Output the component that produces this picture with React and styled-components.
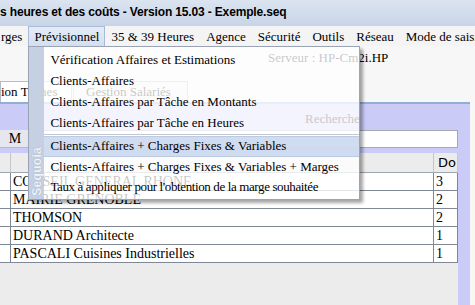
import styled, { createGlobalStyle } from "styled-components";

const GlobalStyle = createGlobalStyle`
  html, body {
    margin: 0;
    padding: 0;
    background: #f2f2f2;
    overflow: hidden;
  }
`;

const Window = styled.div`
  width: 475px;
  height: 305px;
  display: flex;
  flex-direction: column;
  background: #f2f2f2;
  overflow: hidden;
  font: 13px "Liberation Serif", serif;
  color: #000;
`;

const TitleBar = styled.div`
  height: 26px;
  flex: none;
  display: flex;
  align-items: center;
  padding-bottom: 2px;
  box-sizing: border-box;
  background: linear-gradient(#dbe4f0, #c8d5e7);
  font: bold 12px "Liberation Sans", Arial, sans-serif;
  letter-spacing: -0.15px;
  white-space: nowrap;
`;

const MenuBar = styled.div`
  height: 20px;
  flex: none;
  display: flex;
  align-items: stretch;
  background: #f4f4f4;
  white-space: nowrap;
  position: relative;
  z-index: 2;
`;

const MenuItem = styled.div`
  position: relative;
  display: flex;
  align-items: center;
  padding: 0 5px;
  border: 1px solid ${(p) => (p.$open ? "#a7bad6" : "transparent")};
  border-bottom: none;
  background: ${(p) => (p.$open ? "linear-gradient(#e4ecf7, #d3dff0)" : "transparent")};

  &:first-child {
    padding-left: 0;
  }
`;

const Dropdown = styled.div`
  position: absolute;
  top: 100%;
  left: -1px;
  width: 330px;
  display: flex;
  border: 1px solid #9aa4b4;
  background: rgba(255, 255, 255, 0.78);
  box-shadow: 3px 3px 3px rgba(0, 0, 0, 0.35);
`;

const SideStrip = styled.div`
  width: 15px;
  flex: none;
  background: rgba(194, 206, 226, 0.95);
  display: flex;
  align-items: flex-end;
  justify-content: center;
  padding-bottom: 3px;
`;

const SideLabel = styled.span`
  writing-mode: vertical-rl;
  transform: rotate(180deg);
  font: bold 12px "Liberation Sans", Arial, sans-serif;
  color: #eef2f8;
  text-shadow: 0 0 1px #8d9ab0;
  letter-spacing: 0.3px;
`;

const Items = styled.div`
  flex: 1;
  padding: 2px 0 1px;
  display: flex;
  flex-direction: column;
`;

const Item = styled.div`
  height: ${(p) => (p.$low ? 20.5 : 21)}px;
  box-sizing: border-box;
  display: flex;
  align-items: center;
  padding-left: 6px;
  letter-spacing: ${(p) => (p.$tight ? "-0.38px" : "normal")};
  background: ${(p) => (p.$hover ? "rgba(196, 213, 238, 0.8)" : "transparent")};
  border-top: 1px solid ${(p) => (p.$hover ? "#bccbe2" : "transparent")};
  border-bottom: 1px solid ${(p) => (p.$hover ? "#bccbe2" : "transparent")};
  white-space: nowrap;
`;

const Separator = styled.div`
  height: 1px;
  margin: 1px 0 1px;
  background: #c3c9d3;
`;

const Body = styled.div`
  flex: 1;
  display: flex;
  flex-direction: column;
  background: #f7f7f7;
  position: relative;
  z-index: 1;
`;

const ServerRow = styled.div`
  height: 34px;
  flex: none;
  padding: 4px 0 0 268px;
  box-sizing: border-box;
`;

const Tabs = styled.div`
  height: 22px;
  flex: none;
  display: flex;
  align-items: flex-end;
  gap: 1px;
`;

const Tab = styled.div`
  height: 21px;
  width: ${(p) => p.$w}px;
  box-sizing: border-box;
  padding-left: ${(p) => (p.$active ? 0 : 12)}px;
  display: flex;
  align-items: center;
  background: ${(p) => (p.$active ? "#ffffff" : "#f0f0f0")};
  border: 1px solid #b4bcc8;
  border-bottom: none;
`;

const Panel = styled.div`
  flex: 1;
  width: 470px;
  display: flex;
  flex-direction: column;
  background: #cbcbf8;
  border-top: 2px solid #8fb0d4;
  box-sizing: border-box;
`;

const SearchTitle = styled.div`
  height: 26px;
  flex: none;
  padding: 0 0 3px 305px;
  box-sizing: border-box;
  display: flex;
  align-items: flex-end;
`;

const SearchRow = styled.div`
  height: 18px;
  width: 458px;
  flex: none;
  display: flex;
`;

const SearchLabel = styled.div`
  width: 30px;
  display: flex;
  align-items: center;
  justify-content: center;
  background: #e6e6ee;
  border-bottom: 1px solid #b8b8c8;
  font-size: 14px;
`;

const SearchInput = styled.div`
  flex: 1;
  background: #fff;
  border: 1px solid #a5a9b2;
`;

const TableArea = styled.div`
  flex: 1;
  width: 458px;
  margin-top: 5px;
  background: #ececec;
`;

const Grid = styled.div`
  display: grid;
  grid-template-columns: 11px 1fr 24px;
`;

const HeadCell = styled.div`
  height: 20px;
  box-sizing: border-box;
  display: flex;
  align-items: center;
  padding-left: 4px;
  background: #ececec;
  border-right: 1px solid #c6c6c6;
  border-bottom: 1px solid #9da4ae;
  font: 13px "DejaVu Sans", sans-serif;
`;

const Cell = styled.div`
  height: 18px;
  box-sizing: border-box;
  display: flex;
  align-items: center;
  padding-left: 2px;
  background: #fff;
  border-right: 1px solid #7f8894;
  border-bottom: 1px solid #7f8894;
  font-size: 14px;
  white-space: nowrap;
  overflow: hidden;
`;

const menus = [
  { label: "rges" },
  { label: "Prévisionnel", open: true },
  { label: "35 & 39 Heures" },
  { label: "Agence" },
  { label: "Sécurité" },
  { label: "Outils" },
  { label: "Réseau" },
  { label: "Mode de saisie" },
];

const entries = [
  "Vérification Affaires et Estimations",
  "Clients-Affaires",
  "Clients-Affaires par Tâche en Montants",
  "Clients-Affaires par Tâche en Heures",
  "-",
  "Clients-Affaires + Charges Fixes & Variables",
  "Clients-Affaires + Charges Fixes & Variables + Marges",
  "Taux à appliquer pour l'obtention de la marge souhaitée",
];

const rows = [
  ["CONSEIL GENERAL RHONE", 3],
  ["MAIRIE GRENOBLE", 2],
  ["THOMSON", 2],
  ["DURAND Architecte", 1],
  ["PASCALI Cuisines Industrielles", 1],
];

export default function App() {
  return (
    <Window>
      <GlobalStyle />
      <TitleBar>s heures et des coûts - Version 15.03 - Exemple.seq</TitleBar>
      <MenuBar>
        {menus.map((m) => (
          <MenuItem key={m.label} $open={m.open}>
            {m.label}
            {m.open && (
              <Dropdown>
                <SideStrip>
                  <SideLabel>Sequoia</SideLabel>
                </SideStrip>
                <Items>
                  {entries.map((e, i) =>
                    e === "-" ? (
                      <Separator key={i} />
                    ) : (
                      <Item key={i} $hover={i === 5} $low={i > 4} $tight={i === 7}>
                        {e}
                      </Item>
                    )
                  )}
                </Items>
              </Dropdown>
            )}
          </MenuItem>
        ))}
      </MenuBar>
      <Body>
        <ServerRow>Serveur : HP-Cm2i.HP</ServerRow>
        <Tabs>
          <Tab $active $w={72}>ion Tâches</Tab>
          <Tab $w={115}>Gestion Salariés</Tab>
        </Tabs>
        <Panel>
          <SearchTitle>Recherche</SearchTitle>
          <SearchRow>
            <SearchLabel>M</SearchLabel>
            <SearchInput />
          </SearchRow>
          <TableArea>
            <Grid>
              <HeadCell />
              <HeadCell />
              <HeadCell>Do</HeadCell>
              {rows.map(([name, n]) => [
                <Cell key={name + "a"} />,
                <Cell key={name + "b"}>{name}</Cell>,
                <Cell key={name + "c"}>{n}</Cell>,
              ])}
            </Grid>
          </TableArea>
        </Panel>
      </Body>
    </Window>
  );
}
